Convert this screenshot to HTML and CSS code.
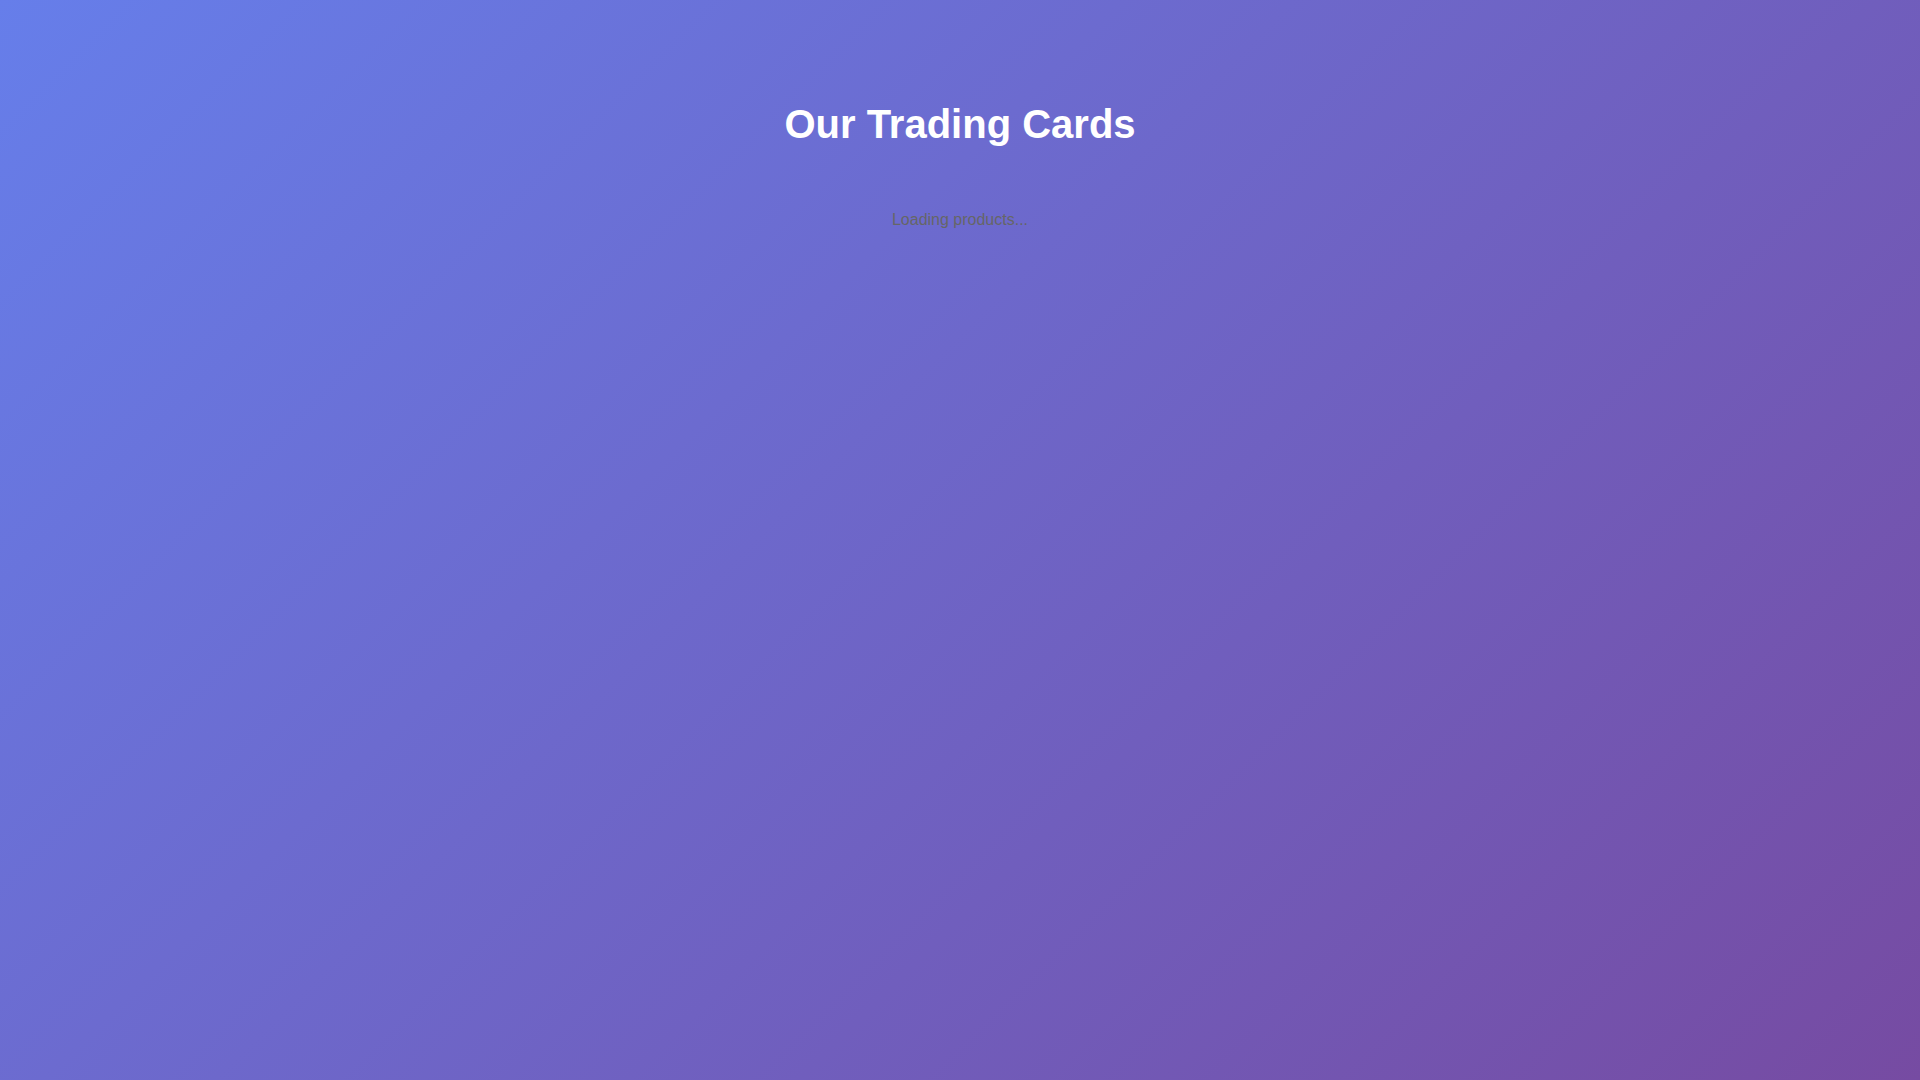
FILE: index.html
```html
<!DOCTYPE html>
<html lang="en">
<head>
<meta charset="utf-8">
<title>Our Trading Cards</title>
<link rel="stylesheet" href="styles.css">
</head>
<body>
<div class="page">
  <header class="header">
    <h1 class="title">Our Trading Cards</h1>
  </header>
  <div class="loading">Loading products...</div>
</div>
</body>
</html>
```

FILE: styles.css
```css
html, body {
  margin: 0;
  padding: 0;
}
body {
  min-height: 100vh;
  font-family: "Liberation Sans", Arial, sans-serif;
  background: linear-gradient(135deg, #667eea 0%, #764ba2 100%);
  background-attachment: fixed;
}
.page {
  max-width: 1200px;
  margin: 0 auto;
  padding: 101px 20px 40px;
}
.header {
  text-align: center;
  margin-bottom: 64px;
}
.title {
  margin: 0;
  font-size: 40px;
  line-height: 46px;
  font-weight: bold;
  color: #ffffff;
}
.loading {
  text-align: center;
  font-size: 16px;
  line-height: 18px;
  color: #666666;
}
```
